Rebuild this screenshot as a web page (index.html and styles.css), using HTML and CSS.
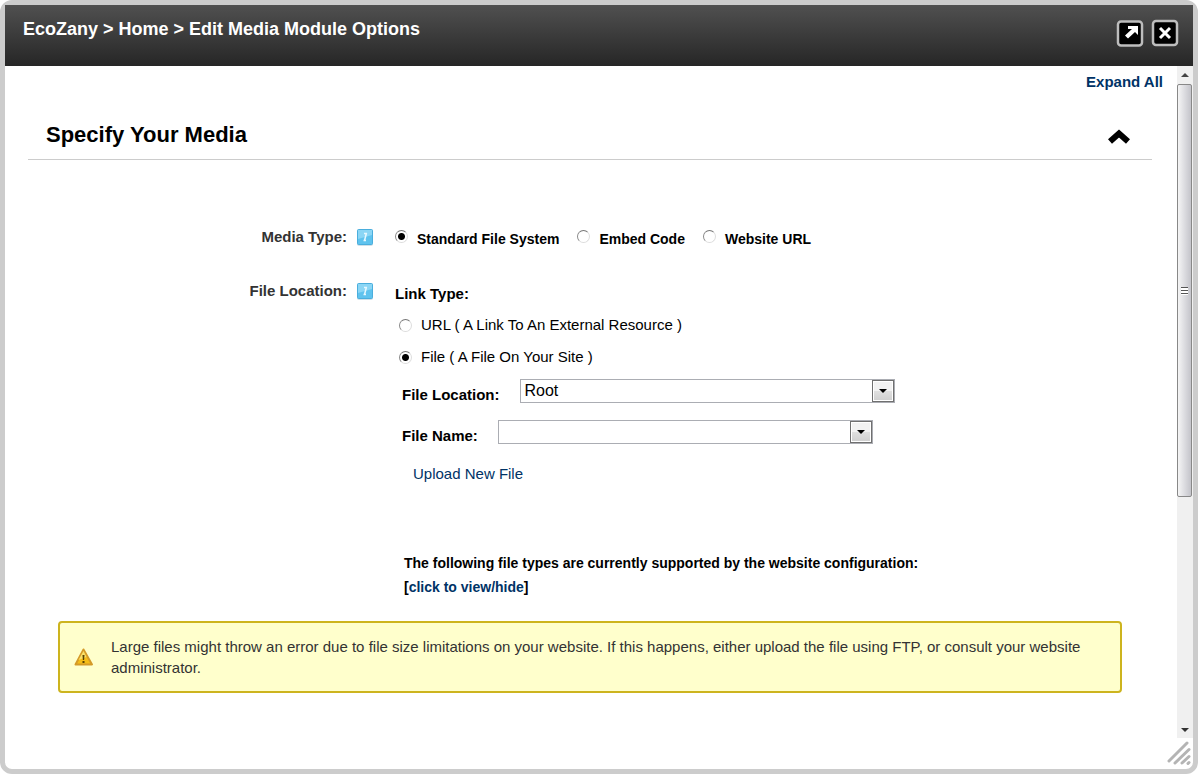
FILE: index.html
```html
<!DOCTYPE html>
<html lang="en">
<head>
<meta charset="utf-8">
<title>Edit Media Module Options</title>
<link rel="stylesheet" href="styles.css">
</head>
<body>
<div class="dialog">
  <header class="titlebar">
    <h1 class="title">EcoZany &gt; Home &gt; Edit Media Module Options</h1>
    <div class="window-buttons">
      <button type="button" class="window-button" aria-label="Maximize">
        <svg width="28" height="28" viewBox="0 0 28 28"><rect x="2" y="2.500" width="24" height="24" rx="3" fill="#000" stroke="#bdbdbd" stroke-width="2.500"/><path d="M12 7h10v9l-3-3-7 6.500-3-3 7-6.500h-4z" fill="#fff"/></svg>
      </button>
      <button type="button" class="window-button" aria-label="Close">
        <svg width="28" height="28" viewBox="0 0 28 28"><rect x="2" y="2" width="24" height="24" rx="3" fill="#000" stroke="#bdbdbd" stroke-width="2.500"/><path d="M9 9l10 10M19 9L9 19" stroke="#fff" stroke-width="3"/></svg>
      </button>
    </div>
  </header>
  <div class="viewport">
    <main class="content">
      <div class="toolbar"><a class="expand" href="#">Expand All</a></div>
      <div class="section-head">
        <h2 class="section-title">Specify Your Media</h2>
        <button type="button" class="collapse" aria-label="Collapse section">
          <svg width="24" height="20" viewBox="0 0 24 20"><path d="M3 16.500L12 8.500l9 8" fill="none" stroke="#000" stroke-width="6"/></svg>
        </button>
      </div>
      <form class="form">
        <div class="row">
          <span class="label" id="media-type">Media Type:</span>
          <button type="button" class="help" aria-label="Help for media type">
            <svg width="18" height="20" viewBox="0 0 18 20"><rect x="1" y="3" width="16" height="16" rx="2" fill="#cfe0e8"/><rect x="1.500" y="2.500" width="15" height="15" rx="1" fill="#5fc3ee" stroke="#4aaedd"/><path d="M2 3h14v5L2 12z" fill="#8bd6f5"/><path d="M8 6.500h3M10.500 6L8.500 13.500M7.500 13.500h2.500" stroke="#e6f8ff" stroke-width="1.500"/></svg>
          </button>
          <div class="media-types" role="radiogroup" aria-labelledby="media-type">
            <label class="option bold"><input class="radio" type="radio" name="media" checked><span>Standard File System</span></label>
            <label class="option bold"><input class="radio" type="radio" name="media"><span>Embed Code</span></label>
            <label class="option bold"><input class="radio" type="radio" name="media"><span>Website URL</span></label>
          </div>
        </div>
        <div class="row">
          <span class="label">File Location:</span>
          <button type="button" class="help" aria-label="Help for file location">
            <svg width="18" height="20" viewBox="0 0 18 20"><rect x="1" y="3" width="16" height="16" rx="2" fill="#cfe0e8"/><rect x="1.500" y="2.500" width="15" height="15" rx="1" fill="#5fc3ee" stroke="#4aaedd"/><path d="M2 3h14v5L2 12z" fill="#8bd6f5"/><path d="M8 6.500h3M10.500 6L8.500 13.500M7.500 13.500h2.500" stroke="#e6f8ff" stroke-width="1.500"/></svg>
          </button>
          <div class="location">
            <div class="link-type" id="link-type">Link Type:</div>
            <div class="link-types" role="radiogroup" aria-labelledby="link-type">
              <label class="option"><input class="radio" type="radio" name="link"><span>URL ( A Link To An External Resource )</span></label>
              <label class="option"><input class="radio" type="radio" name="link" checked><span>File ( A File On Your Site )</span></label>
            </div>
            <div class="field">
              <label class="field-label" for="folder">File Location:</label>
              <div class="picker"><select class="select" id="folder"><option>Root</option></select><span class="arrow" aria-hidden="true"></span></div>
            </div>
            <div class="field">
              <label class="field-label" for="file">File Name:</label>
              <div class="picker"><select class="select" id="file"><option></option></select><span class="arrow" aria-hidden="true"></span></div>
            </div>
            <a class="upload" href="#">Upload New File</a>
            <p class="types">The following file types are currently supported by the website configuration:<br>[<a class="types-link" href="#">click to view/hide</a>]</p>
          </div>
        </div>
      </form>
      <div class="warning">
        <svg class="warning-icon" width="20" height="20" viewBox="0 0 20 20"><path d="M9.500 2.500L18 17.500H1.500z" fill="#f5bd18" stroke="#d49a28" stroke-width="2" stroke-linejoin="round"/><path d="M9.500 4l3 6-8 3z" fill="#fae06a"/><path d="M8.500 8h2l-.4 5H8.900z" fill="#5a4300"/><rect x="8.500" y="14" width="2" height="2" fill="#5a4300"/></svg>
        <p class="warning-text">Large files might throw an error due to file size limitations on your website. If this happens, either upload the file using FTP, or consult your website administrator.</p>
      </div>
    </main>
    <div class="scrollbar" aria-hidden="true">
      <svg class="scroll-arrow" width="16" height="18" viewBox="0 0 16 18"><path d="M4 11h8L8 7z" fill="#444"/></svg>
      <div class="track"><div class="thumb"><span class="grip"></span></div></div>
      <svg class="scroll-arrow" width="16" height="18" viewBox="0 0 16 18"><path d="M4 8h8l-4 4z" fill="#333"/></svg>
    </div>
  </div>
  <footer class="footer">
    <svg width="26" height="26" viewBox="0 0 26 26"><path d="M3 20L21 2M9 22L23 8.500M16 22l7-6.500M22 22.500l1-1" fill="none" stroke="#b4b4b4" stroke-width="3" stroke-linecap="round"/></svg>
  </footer>
</div>
</body>
</html>
```
FILE: styles.css
```css
* { box-sizing: border-box; }

body {
  margin: 0;
  background: #fff;
  color: #000;
  font: 15px/20px "Liberation Sans", Arial, sans-serif;
}

h1, h2, p { margin: 0; }
a { color: #003366; text-decoration: none; }
button { border: 0; padding: 0; background: none; cursor: pointer; }
svg { display: block; }

.dialog {
  display: flex;
  flex-direction: column;
  min-height: 100vh;
  border: 5px solid #ccc;
  border-radius: 12px;
}

.titlebar {
  display: flex;
  justify-content: space-between;
  align-items: flex-start;
  min-height: 61px;
  padding: 14px 14px 0 18px;
  background: linear-gradient(#505050, #262626);
}

.title { color: #fff; font-size: 18px; line-height: 20px; }
.window-buttons { display: flex; gap: 7px; }

.viewport { display: flex; flex: 1; }
.content { flex: 1; padding: 6px 14px 0 23px; }
.toolbar { text-align: right; }
.expand { font-weight: bold; }

.section-head {
  display: flex;
  justify-content: space-between;
  align-items: center;
  margin: 20px 11px 0 0;
  padding: 8px 21px 9px 18px;
  border-bottom: 1px solid #ccc;
}
.section-title { font-size: 22px; line-height: 30px; }

.form { display: grid; gap: 33px; padding-top: 67px; }
.row {
  display: grid;
  grid-template-columns: 319px 18px 1fr;
  column-gap: 9px;
  align-items: start;
}
.label { color: #333; font-weight: bold; text-align: right; }
.media-types { display: flex; gap: 18px; padding-left: 12px; }
.option { display: flex; align-items: center; gap: 9px; }
.bold {
  align-items: flex-start;
  padding-top: 3px;
  font-size: 14px;
  line-height: 18px;
  font-weight: bold;
}

.radio {
  appearance: none;
  flex: none;
  width: 13px;
  height: 13px;
  margin: 0;
  border: 1px solid;
  border-color: #777 #ddd #ddd #888;
  border-radius: 50%;
  background: #fff;
}
.radio:checked { background: radial-gradient(circle, #000 3px, #fff 4px); }

.location { padding: 3px 0 0 11px; }
.link-type { padding-left: 1px; font-weight: bold; }
.link-types { display: grid; gap: 12px; padding: 11px 0 12px 5px; }
.field { display: flex; align-items: flex-start; gap: 20px; padding: 0 0 17px 8px; }
.field-label { padding-top: 8px; line-height: 16px; font-weight: bold; }
.picker {
  display: flex;
  width: 375px;
  height: 24px;
  border: 1px solid #abadb3;
}
.select {
  appearance: none;
  flex: 1;
  padding: 0 4px;
  border: 0;
  background: #fff;
  color: #000;
  font: 16px/22px "Liberation Sans", Arial, sans-serif;
}
.arrow {
  display: grid;
  place-items: center;
  width: 22px;
  border: 1px solid #707070;
  background: linear-gradient(#f2f2f2 50%, #e0e0e0 50%, #cfcfcf);
  box-shadow: inset 0 0 0 1px #fff;
}
.arrow::before {
  content: "";
  border: 4px solid transparent;
  border-top-color: #000;
  border-bottom: 0;
}
.upload { display: block; padding: 3px 0 0 19px; }
.types { padding: 67px 0 0 10px; font-size: 14px; line-height: 24px; font-weight: bold; }

.warning {
  display: flex;
  align-items: center;
  gap: 17px;
  margin: 22px 41px 0 30px;
  padding: 13px 24px 13px 14px;
  border: 2px solid #cdb41e;
  border-radius: 4px;
  background: #ffffcc;
}
.warning-icon { flex: none; }
.warning-text { color: #333; line-height: 21px; }

.scrollbar {
  display: flex;
  flex-direction: column;
  width: 16px;
  background: #f0f0f0;
}
.track { flex: 1; }
.thumb {
  display: grid;
  place-items: center;
  width: 15px;
  height: 65%;
  border: 1px solid #888;
  border-radius: 2px;
  background: linear-gradient(90deg, #f5f5f5, #dcdce0 50%, #c4c4ca);
}
.grip {
  width: 7px;
  height: 8px;
  background: repeating-linear-gradient(#555 0 1px, #fff 1px 3px);
}

.footer { display: flex; justify-content: flex-end; height: 31px; padding: 3px 1px 0 0; }
```
